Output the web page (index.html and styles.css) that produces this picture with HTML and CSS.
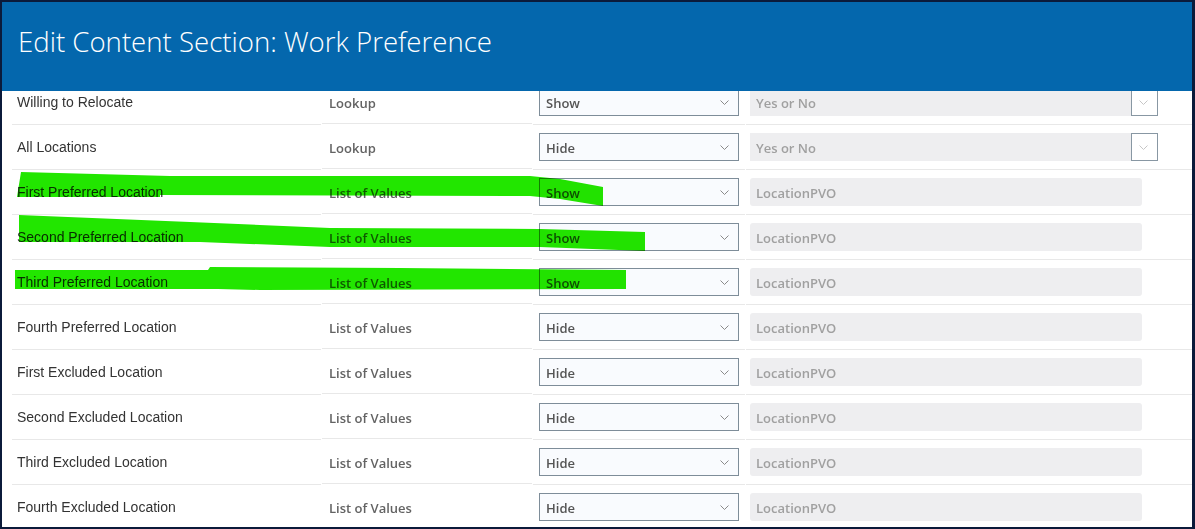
FILE: index.html
```html
<!DOCTYPE html>
<html>
<head>
  <meta charset='utf-8'>
  <title>Edit Content Section: Work Preference</title>
  <link rel="stylesheet" href="styles.css">
</head>
<body>
  <div class="frame">
    <div class="dialog-head">
      <h1>Edit Content Section: Work Preference</h1>
    </div>

    <div class="rows">
      <div class="rows-scroll">
        <div class="row">
          <div class="cell name">Willing to Relocate</div>
          <div class="cell type">Lookup</div>
          <div class="cell"><div class="select">Show<svg class="chev" viewBox="0 0 9 5"><path d="M0.5 0.5 L4.5 4.5 L8.5 0.5"/></svg></div></div>
          <div class="cell"><div class="field lookup"><span class="field-text">Yes or No</span><span class="field-btn"><svg class="chev light" viewBox="0 0 9 5"><path d="M0.5 0.5 L4.5 4.5 L8.5 0.5"/></svg></span></div></div>
        </div>
        <div class="row">
          <div class="cell name">All Locations</div>
          <div class="cell type">Lookup</div>
          <div class="cell"><div class="select">Hide<svg class="chev" viewBox="0 0 9 5"><path d="M0.5 0.5 L4.5 4.5 L8.5 0.5"/></svg></div></div>
          <div class="cell"><div class="field lookup"><span class="field-text">Yes or No</span><span class="field-btn"><svg class="chev light" viewBox="0 0 9 5"><path d="M0.5 0.5 L4.5 4.5 L8.5 0.5"/></svg></span></div></div>
        </div>
        <div class="row">
          <div class="cell name">First Preferred Location</div>
          <div class="cell type">List of Values</div>
          <div class="cell"><div class="select">Show<svg class="chev" viewBox="0 0 9 5"><path d="M0.5 0.5 L4.5 4.5 L8.5 0.5"/></svg></div></div>
          <div class="cell"><div class="field"><span class="field-text">LocationPVO</span></div></div>
        </div>
        <div class="row">
          <div class="cell name">Second Preferred Location</div>
          <div class="cell type">List of Values</div>
          <div class="cell"><div class="select">Show<svg class="chev" viewBox="0 0 9 5"><path d="M0.5 0.5 L4.5 4.5 L8.5 0.5"/></svg></div></div>
          <div class="cell"><div class="field"><span class="field-text">LocationPVO</span></div></div>
        </div>
        <div class="row">
          <div class="cell name">Third Preferred Location</div>
          <div class="cell type">List of Values</div>
          <div class="cell"><div class="select">Show<svg class="chev" viewBox="0 0 9 5"><path d="M0.5 0.5 L4.5 4.5 L8.5 0.5"/></svg></div></div>
          <div class="cell"><div class="field"><span class="field-text">LocationPVO</span></div></div>
        </div>
        <div class="row">
          <div class="cell name">Fourth Preferred Location</div>
          <div class="cell type">List of Values</div>
          <div class="cell"><div class="select">Hide<svg class="chev" viewBox="0 0 9 5"><path d="M0.5 0.5 L4.5 4.5 L8.5 0.5"/></svg></div></div>
          <div class="cell"><div class="field"><span class="field-text">LocationPVO</span></div></div>
        </div>
        <div class="row">
          <div class="cell name">First Excluded Location</div>
          <div class="cell type">List of Values</div>
          <div class="cell"><div class="select">Hide<svg class="chev" viewBox="0 0 9 5"><path d="M0.5 0.5 L4.5 4.5 L8.5 0.5"/></svg></div></div>
          <div class="cell"><div class="field"><span class="field-text">LocationPVO</span></div></div>
        </div>
        <div class="row">
          <div class="cell name">Second Excluded Location</div>
          <div class="cell type">List of Values</div>
          <div class="cell"><div class="select">Hide<svg class="chev" viewBox="0 0 9 5"><path d="M0.5 0.5 L4.5 4.5 L8.5 0.5"/></svg></div></div>
          <div class="cell"><div class="field"><span class="field-text">LocationPVO</span></div></div>
        </div>
        <div class="row">
          <div class="cell name">Third Excluded Location</div>
          <div class="cell type">List of Values</div>
          <div class="cell"><div class="select">Hide<svg class="chev" viewBox="0 0 9 5"><path d="M0.5 0.5 L4.5 4.5 L8.5 0.5"/></svg></div></div>
          <div class="cell"><div class="field"><span class="field-text">LocationPVO</span></div></div>
        </div>
        <div class="row">
          <div class="cell name">Fourth Excluded Location</div>
          <div class="cell type">List of Values</div>
          <div class="cell"><div class="select">Hide<svg class="chev" viewBox="0 0 9 5"><path d="M0.5 0.5 L4.5 4.5 L8.5 0.5"/></svg></div></div>
          <div class="cell"><div class="field"><span class="field-text">LocationPVO</span></div></div>
        </div>
      </div>
    </div>

    <!-- highlighter marks drawn over the screenshot -->
    <svg class="marks" viewBox="0 0 1195 529">
      <polygon points="21,172 170,176 530,176 560,179 603,187 603,206 560,199 530,196 160,195 160,197 17,197"/>
      <polygon points="19,215 190,222 330,228 540,229 645,232 645,251 540,247 330,247 200,242 19,242"/>
      <polygon points="15,270 208,270 210,267 400,268 626,270 626,289 260,290 218,289 15,289"/>
    </svg>
  </div>
</body>
</html>
```

FILE: styles.css
```css
html, body {
  margin: 0;
  height: 100%;
}

body {
  background-color: #0b1a3a;
  font-family: "Liberation Sans", Arial, sans-serif;
  overflow: hidden;
}

.frame {
  position: relative;
  margin: 2px 3px 2px 2px;
  width: 1190px;
  height: 525px;
  background-color: #fff;
  overflow: hidden;
}

.dialog-head {
  position: relative;
  z-index: 2;
  height: 89px;
  background-color: #0467ad;
  display: flex;
  align-items: center;
}

.dialog-head h1 {
  margin: 0 0 12px 16px;
  font-family: "Open Sans", sans-serif;
  font-weight: 300;
  font-size: 27.6px;
  color: #fff;
}

.rows {
  height: 436px;
  overflow: hidden;
}

.rows-scroll {
  margin-top: -11px;
}

.row {
  display: grid;
  grid-template-columns: 309px 210px 212px 1fr;
  column-gap: 1px;
  margin-left: 10px;
}

.cell {
  height: 44px;
  border-bottom: 1px solid #e8e8e8;
  display: flex;
  align-items: center;
  padding-left: 6px;
}

.cell:last-child {
  padding-left: 4px;
}

.name {
  padding-left: 5px;
  font-size: 14px;
  color: #333;
}

.type {
  padding-left: 7px;
  padding-top: 2px;
  box-sizing: border-box;
  font-family: "Open Sans", sans-serif;
  font-weight: 600;
  font-size: 13px;
  color: #636363;
}

.select {
  position: relative;
  box-sizing: border-box;
  width: 200px;
  height: 28px;
  padding: 2px 0 0 6px;
  border: 1px solid #7e8d99;
  background-color: #f9fbfe;
  display: flex;
  align-items: center;
  font-family: "Open Sans", sans-serif;
  font-weight: 600;
  font-size: 13px;
  color: #555;
}

.chev {
  position: absolute;
  right: 9px;
  top: 11px;
  width: 9px;
  height: 5px;
  fill: none;
  stroke: #8a8a8a;
  stroke-width: 1;
}

.chev.light {
  stroke: #c6c6c6;
  right: 9px;
}

.field {
  box-sizing: border-box;
  width: 392px;
  height: 28px;
  padding-top: 2px;
  border-radius: 3px;
  background-color: #eeeef0;
  display: flex;
  align-items: center;
  font-family: "Open Sans", sans-serif;
  font-weight: 600;
  font-size: 13px;
  color: #a0a0a0;
}

.field-text {
  padding-left: 6px;
  flex: 1;
}

.field.lookup {
  width: 408px;
  padding-top: 0;
  border-radius: 0;
}

.field.lookup .field-text {
  padding-top: 2px;
}

.field-btn {
  position: relative;
  box-sizing: border-box;
  width: 27px;
  height: 28px;
  border: 1px solid #8897a3;
  background-color: #fff;
}

.marks {
  position: absolute;
  top: -2px;
  left: -2px;
  width: 1195px;
  height: 529px;
  mix-blend-mode: multiply;
  pointer-events: none;
}

.marks polygon {
  fill: #22e600;
}
```
